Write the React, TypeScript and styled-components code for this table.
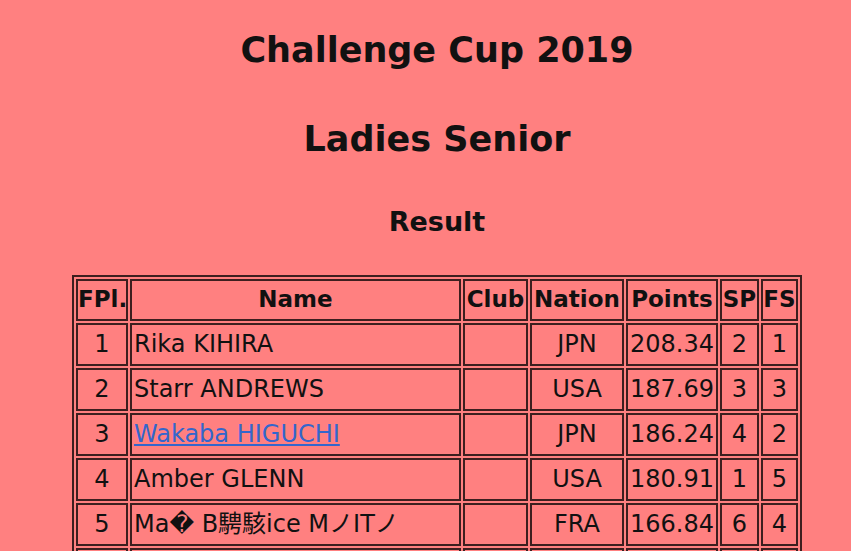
import React from "react";
import styled, { createGlobalStyle } from "styled-components";

const Global = createGlobalStyle`
  html, body {
    margin: 0;
    padding: 0;
    background: #ff8080;
  }
  body {
    font-family: "DejaVu Sans", "Noto Sans CJK JP", sans-serif;
    color: #111;
  }
`;

const Page = styled.div`
  padding: 30px 0 40px 23px;
  text-align: center;
`;

const Title = styled.h1`
  margin: 0 0 48px;
  font-size: 35px;
  line-height: 41px;
  font-weight: bold;
`;

const Sub = styled.h2`
  margin: -2px 0 38px;
  font-size: 27px;
  line-height: 31px;
  font-weight: bold;
`;

const Table = styled.table`
  margin: 0 auto;
  border-collapse: separate;
  border-spacing: 2px;
  border: 2px solid #3d1f1f;
  table-layout: fixed;
  width: 730px;
`;

const Th = styled.th<{ $w: number }>`
  box-sizing: border-box;
  width: ${(p) => p.$w}px;
  border: 2px solid #3d1f1f;
  padding: 0 0 2px;
  font-size: 23px;
  line-height: 36px;
  font-weight: bold;
  text-align: center;
  white-space: nowrap;
  overflow: visible;
`;

const Td = styled.td<{ $align?: string }>`
  box-sizing: border-box;
  border: 2px solid #3d1f1f;
  padding: 1px 2px;
  font-size: 24px;
  line-height: 37px;
  text-align: ${(p) => p.$align || "center"};
  white-space: nowrap;
  overflow: visible;
`;

const NameLink = styled.a`
  color: #3366cc;
  text-decoration: underline;
`;

type Row = {
  pl: string;
  name: string;
  link?: boolean;
  nation: string;
  points: string;
  sp: string;
  fs: string;
};

const rows: Row[] = [
  { pl: "1", name: "Rika KIHIRA", nation: "JPN", points: "208.34", sp: "2", fs: "1" },
  { pl: "2", name: "Starr ANDREWS", nation: "USA", points: "187.69", sp: "3", fs: "3" },
  { pl: "3", name: "Wakaba HIGUCHI", link: true, nation: "JPN", points: "186.24", sp: "4", fs: "2" },
  { pl: "4", name: "Amber GLENN", nation: "USA", points: "180.91", sp: "1", fs: "5" },
  { pl: "5", name: "Ma\uFFFD B騁駭ice MノITノ", nation: "FRA", points: "166.84", sp: "6", fs: "4" },
  { pl: "", name: "", nation: "", points: "", sp: "", fs: "" },
];

const cols: [string, number][] = [
  ["FPl.", 52],
  ["Name", 331],
  ["Club", 65],
  ["Nation", 94],
  ["Points", 92],
  ["SP", 39],
  ["FS", 37],
];

const blank = (s: string) => s || "\u00a0";

export default function App() {
  return (
    <>
      <Global />
      <Page>
        <Title>Challenge Cup 2019</Title>
        <Title>Ladies Senior</Title>
        <Sub>Result</Sub>
        <Table>
          <thead>
            <tr>
              {cols.map(([label, w]) => (
                <Th key={label} $w={w}>
                  {label}
                </Th>
              ))}
            </tr>
          </thead>
          <tbody>
            {rows.map((r, i) => (
              <tr key={i}>
                <Td>{blank(r.pl)}</Td>
                <Td $align="left">
                  {r.link ? <NameLink href="#">{r.name}</NameLink> : blank(r.name)}
                </Td>
                <Td>&nbsp;</Td>
                <Td>{blank(r.nation)}</Td>
                <Td>{blank(r.points)}</Td>
                <Td>{blank(r.sp)}</Td>
                <Td>{blank(r.fs)}</Td>
              </tr>
            ))}
          </tbody>
        </Table>
      </Page>
    </>
  );
}
